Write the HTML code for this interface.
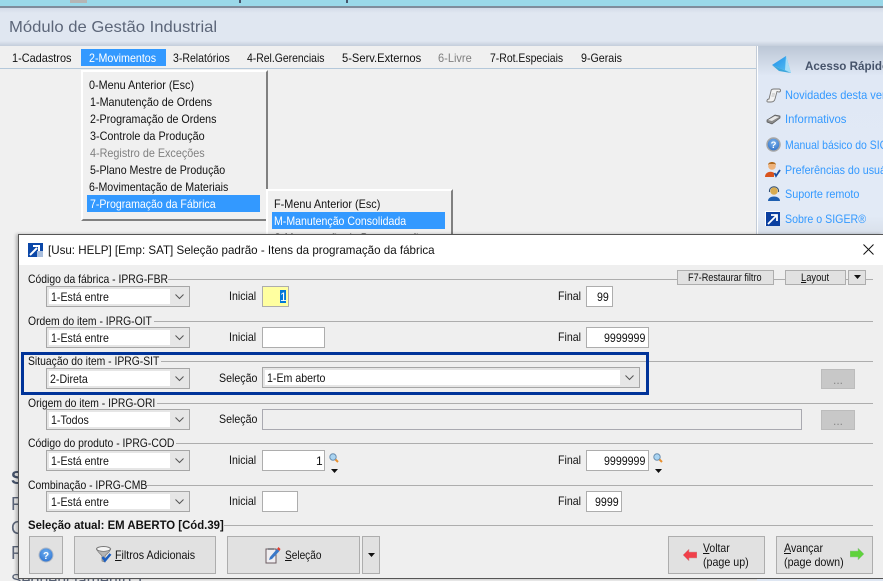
<!DOCTYPE html>
<html lang="pt"><head><meta charset="utf-8"><title>Módulo de Gestão Industrial</title>
<style>
html{margin:0;padding:0;width:883px;height:581px;overflow:hidden}
body{margin:0;padding:0;width:883px;height:581px;position:relative;overflow:hidden;background:#f0f0f0;font:12px/14px "Liberation Sans",sans-serif;color:#111}
#root{left:0;top:0;width:883px;height:581px;overflow:hidden;background:#f0f0f0}
div,svg{position:absolute}
.t{position:absolute;white-space:nowrap;height:14px;transform:scaleX(.885);transform-origin:0 50%}
.box{background:#fff;border:1px solid #adadad;box-sizing:border-box}
.combo{box-sizing:border-box;border:1px solid #a6a6a6;background:#e6e6e6;width:144px;left:46px;height:21px}
.combo i{position:absolute;left:2px;top:2px;bottom:2px;right:19px;background:#fff}
.combo svg{right:5px;top:7px}
.line{height:1px;background:#adadad;right:10px}
.btn{box-sizing:border-box;border:1px solid #adadad;background:#e1e1e1}
.dots{left:821px;width:34px;height:20px;background:#c8c8c8;border:1px solid #bcbcbc;box-sizing:border-box;color:#888;text-align:center;line-height:20px}
.link{color:#3399ff;left:785px}
u{text-decoration:underline}
</style></head><body><div id="root">
<div style="left:0;top:0;width:883px;height:6px;background:#9ad8e9"></div>
<div style="left:70px;top:0;width:17px;height:3px;background:#b5b5b5"></div>
<div style="left:239px;top:0;width:2px;height:3px;background:#46546a"></div>
<div style="left:346px;top:0;width:2px;height:3px;background:#46546a"></div>
<div style="left:0;top:6px;width:883px;height:2px;background:#7f8c9c"></div>
<div style="left:0;top:8px;width:883px;height:38px;background:linear-gradient(#d3dbe8 0,#e0e7f1 5px,#e0e7f1 33px,#c4cedb 38px)"></div>
<span class="t" style="left:9px;top:19px;font-size:16px;line-height:18px;color:#5c6679;transform:scaleX(1.04)">Módulo de Gestão Industrial</span>

<div style="left:0;top:46px;width:756px;height:22px;background:#f0f0f0"></div>
<div style="left:0;top:68px;width:756px;height:1px;background:#b4c8da"></div>
<div style="left:81px;top:49px;width:85px;height:17px;background:#3399ff"></div>
<span class="t" style="left:12px;top:51px;transform:scaleX(.91)">1-Cadastros</span>
<span class="t" style="left:89px;top:51px;color:#fff;transform:scaleX(.89)">2-Movimentos</span>
<span class="t" style="left:173px;top:51px;transform:scaleX(.877)">3-Relatórios</span>
<span class="t" style="left:247px;top:51px;transform:scaleX(.867)">4-Rel.Gerenciais</span>
<span class="t" style="left:342px;top:51px;transform:scaleX(.93)">5-Serv.Externos</span>
<span class="t" style="left:438px;top:51px;color:#808080;transform:scaleX(.92)">6-Livre</span>
<span class="t" style="left:490px;top:51px;transform:scaleX(.87)">7-Rot.Especiais</span>
<span class="t" style="left:581px;top:51px;transform:scaleX(.89)">9-Gerais</span>

<div style="left:757px;top:46px;width:126px;height:190px;background:linear-gradient(#bcc7d6 0,#e0e8f5 30px,#e2eaf6 170px,#d8dfe9 190px);border-left:1px solid #fff;box-sizing:border-box"></div>
<div style="left:756px;top:46px;width:1px;height:190px;background:#c3ccd8"></div>
<svg style="left:771px;top:55px" width="22" height="20" viewBox="0 0 22 20"><defs><linearGradient id="g1" x1="0" y1="0" x2="1" y2="1"><stop offset="0" stop-color="#1f8fe8"/><stop offset="1" stop-color="#5cc4f4"/></linearGradient></defs><path d="M1 10 L15 1 L20 18 Z" fill="url(#g1)"/><path d="M15 1 L20 18 L14 15 Z" fill="#a5def8"/><path d="M1 10 L20 18 L8 16Z" fill="#3aa6dc"/></svg>
<svg style="left:766px;top:88px" width="16" height="15" viewBox="0 0 16 15"><path d="M5 3 C5 1 7 1 8 1 H13 C15 1 15 4 13 4 L11 3.500 L9 11 C8.500 13 7 14 5 14 H2 C0 14 1 11 3 11 Z" fill="#f2f2f2" stroke="#777" stroke-width=".9"/><path d="M6 6H9M5.500 8H8.500" stroke="#aaa" stroke-width=".8"/></svg>
<svg style="left:766px;top:113px" width="15" height="12" viewBox="0 0 15 12"><path d="M1 7 L9 2 L14 3 L14 5 L6 11 L1 9 Z" fill="#8c8c8c" stroke="#555" stroke-width=".7"/><path d="M2 7 L9 3 L13 4 L6 8 Z" fill="#e8e8e8"/></svg>
<svg style="left:766px;top:137px" width="15" height="15" viewBox="0 0 15 15"><defs><radialGradient id="g2" cx=".5" cy=".35" r=".7"><stop offset="0" stop-color="#7fb6ee"/><stop offset="1" stop-color="#2b6cc4"/></radialGradient></defs><circle cx="7.500" cy="7.500" r="6.500" fill="url(#g2)" stroke="#a6a6a6" stroke-width="1.500"/><text x="7.500" y="11" font-family="Liberation Sans" font-size="9.500" font-weight="bold" fill="#fff" text-anchor="middle">?</text></svg>
<svg style="left:765px;top:161px" width="16" height="17" viewBox="0 0 16 17"><circle cx="7" cy="5" r="3.800" fill="#eeb27a"/><path d="M3 4 C3 0 11 0 11 4 L10 3 H4 Z" fill="#b06a20"/><path d="M0 16 C0 9 11 9 11 16 Z" fill="#d9541e"/><rect x="9" y="10" width="6" height="6" fill="#e8eef8"/><path d="M9.500 12 L11 15 L15 9" stroke="#1c4fa0" stroke-width="1.800" fill="none"/></svg>
<svg style="left:767px;top:186px" width="14" height="15" viewBox="0 0 14 15"><circle cx="7" cy="5" r="3.800" fill="#d8ac50"/><path d="M2.500 6 C1.500 -1 12.500 -1 11.500 6" fill="none" stroke="#2b4a70" stroke-width="1"/><path d="M1 15 C1 9 13 9 13 15 Z" fill="#1e5fb0"/></svg>
<svg style="left:765px;top:211px" width="15" height="15" viewBox="0 0 15 15"><rect width="15" height="15" fill="#fff"/><rect x="1" y="1" width="14" height="14" fill="#0b3fa0"/><path d="M3 13 L11 5 M6 4 H12 V10" stroke="#fff" stroke-width="1.800" fill="none"/></svg>
<span class="t" style="left:805px;top:59px;font-weight:bold;color:#46536a;transform:scaleX(.97)">Acesso Rápido</span>
<span class="t link" style="top:88px;transform:scaleX(.92)">Novidades desta versão</span>
<span class="t link" style="top:112px;transform:scaleX(.94)">Informativos</span>
<span class="t link" style="top:138px;transform:scaleX(.87)">Manual básico do SIGER</span>
<span class="t link" style="top:163px;transform:scaleX(.89)">Preferências do usuário</span>
<span class="t link" style="top:187px;transform:scaleX(.9)">Suporte remoto</span>
<span class="t link" style="top:212px">Sobre o SIGER®</span>

<div style="left:81px;top:70px;width:187px;height:151px;box-sizing:border-box;background:#f0f0f0;border:2px solid #fff;border-right-color:#808080;border-bottom-color:#808080"></div>
<span class="t" style="left:89px;top:78px;transform:scaleX(.9)">0-Menu Anterior (Esc)</span>
<span class="t" style="left:90px;top:95px;transform:scaleX(.897)">1-Manutenção de Ordens</span>
<span class="t" style="left:90px;top:112px;transform:scaleX(.89)">2-Programação de Ordens</span>
<span class="t" style="left:90px;top:129px;transform:scaleX(.9)">3-Controle da Produção</span>
<span class="t" style="left:90px;top:146px;color:#808080;transform:scaleX(.9)">4-Registro de Exceções</span>
<span class="t" style="left:90px;top:163px;transform:scaleX(.885)">5-Plano Mestre de Produção</span>
<span class="t" style="left:89px;top:180px;transform:scaleX(.885)">6-Movimentação de Materiais</span>
<div style="left:87px;top:195px;width:173px;height:17px;background:#3399ff"></div>
<span class="t" style="left:90px;top:197px;color:#fff;transform:scaleX(.88)">7-Programação da Fábrica</span>

<div style="left:266px;top:189px;width:187px;height:60px;box-sizing:border-box;background:#f0f0f0;border:2px solid #fff;border-right-color:#808080"></div>
<span class="t" style="left:274px;top:197px;transform:scaleX(.906)">F-Menu Anterior (Esc)</span>
<div style="left:272px;top:212px;width:173px;height:17px;background:#3399ff"></div>
<span class="t" style="left:274px;top:214px;color:#fff;transform:scaleX(.88)">M-Manutenção Consolidada</span>
<span class="t" style="left:274px;top:231px">S-Manutenção de Programação</span>

<span class="t" style="left:11px;top:468px;font-size:18px;font-weight:bold;line-height:20px;color:#46536a;transform:none">S</span>
<span class="t" style="left:11px;top:494px;font-size:18px;line-height:20px;color:#5c6679;transform:none">F</span>
<span class="t" style="left:11px;top:518px;font-size:18px;line-height:20px;color:#5c6679;transform:none">C</span>
<span class="t" style="left:11px;top:543px;font-size:18px;line-height:20px;color:#5c6679;transform:none">R</span>
<span class="t" style="left:11px;top:571px;font-size:16px;line-height:20px;color:#5c6679;transform:none">Sequenciamento T</span>

<div style="left:18px;top:234px;width:865px;height:345px;box-sizing:border-box;background:#efefef;border:1px solid #555;border-right:0;box-shadow:-2px 0 3px rgba(0,0,0,.25)"></div>
<div style="left:19px;top:235px;width:864px;height:30px;background:#fff"></div>
<svg style="left:28px;top:243px" width="15" height="14" viewBox="0 0 15 14"><rect width="15" height="14" fill="#0b47a8"/><path d="M2 12 L9 5 M5 3 H11 V9" stroke="#fff" stroke-width="2" fill="none"/><rect x="9" y="8" width="6" height="6" fill="#a9bedd"/></svg>
<span class="t" style="left:48px;top:243px;transform:scaleX(.965)">[Usu: HELP] [Emp: SAT] Seleção padrão - Itens da programação da fábrica</span>
<svg style="left:863px;top:244px" width="11" height="11" viewBox="0 0 11 11"><path d="M.5 .5 L10.500 10.500 M10.500 .5 L.5 10.500" stroke="#111" stroke-width="1"/></svg>

<div class="line" style="left:168px;top:279px"></div>
<div class="line" style="left:154px;top:321px"></div>
<div class="line" style="left:161px;top:361px"></div>
<div class="line" style="left:157px;top:403px"></div>
<div class="line" style="left:176px;top:443px"></div>
<div class="line" style="left:145px;top:485px"></div>
<div class="line" style="left:224px;top:525px"></div>

<span class="t" style="left:28px;top:272px;transform:scaleX(.864)">Código da fábrica - IPRG-FBR</span>
<span class="t" style="left:28px;top:314px;transform:scaleX(.864)">Ordem do item - IPRG-OIT</span>
<span class="t" style="left:28px;top:354px;transform:scaleX(.864)">Situação do item - IPRG-SIT</span>
<span class="t" style="left:28px;top:396px;transform:scaleX(.864)">Origem do item - IPRG-ORI</span>
<span class="t" style="left:28px;top:436px;transform:scaleX(.864)">Código do produto - IPRG-COD</span>
<span class="t" style="left:28px;top:478px;transform:scaleX(.864)">Combinação - IPRG-CMB</span>
<span class="t" style="left:28px;top:518px;font-weight:bold;transform:scaleX(.947)">Seleção atual: EM ABERTO [Cód.39]</span>

<div class="btn" style="left:677px;top:270px;width:97px;height:15px"></div>
<span class="t" style="left:688px;top:271px;font-size:11px;transform:scaleX(.83)">F7-Restaurar filtro</span>
<div class="btn" style="left:785px;top:270px;width:61px;height:15px"></div>
<span class="t" style="left:801px;top:271px;font-size:11px;transform:scaleX(.85)"><u>L</u>ayout</span>
<div class="btn" style="left:848px;top:270px;width:18px;height:15px"></div>
<svg style="left:854px;top:275px" width="7" height="4" viewBox="0 0 7 4"><path d="M0 0H7L3.500 4Z" fill="#111"/></svg>

<div class="combo" style="top:286px"><i></i><svg width="9" height="6" viewBox="0 0 9 6"><path d="M.5 .5 L4.500 4.500 L8.500 .5" stroke="#555" fill="none"/></svg></div>
<div class="combo" style="top:327px"><i></i><svg width="9" height="6" viewBox="0 0 9 6"><path d="M.5 .5 L4.500 4.500 L8.500 .5" stroke="#555" fill="none"/></svg></div>
<div class="combo" style="top:368px"><i></i><svg width="9" height="6" viewBox="0 0 9 6"><path d="M.5 .5 L4.500 4.500 L8.500 .5" stroke="#555" fill="none"/></svg></div>
<div class="combo" style="top:409px"><i></i><svg width="9" height="6" viewBox="0 0 9 6"><path d="M.5 .5 L4.500 4.500 L8.500 .5" stroke="#555" fill="none"/></svg></div>
<div class="combo" style="top:450px"><i></i><svg width="9" height="6" viewBox="0 0 9 6"><path d="M.5 .5 L4.500 4.500 L8.500 .5" stroke="#555" fill="none"/></svg></div>
<div class="combo" style="top:491px"><i></i><svg width="9" height="6" viewBox="0 0 9 6"><path d="M.5 .5 L4.500 4.500 L8.500 .5" stroke="#555" fill="none"/></svg></div>
<span class="t" style="left:51px;top:290px">1-Está entre</span>
<span class="t" style="left:51px;top:331px">1-Está entre</span>
<span class="t" style="left:50px;top:372px">2-Direta</span>
<span class="t" style="left:51px;top:413px">1-Todos</span>
<span class="t" style="left:51px;top:454px">1-Está entre</span>
<span class="t" style="left:51px;top:495px">1-Está entre</span>

<span class="t" style="left:229px;top:289px">Inicial</span>
<span class="t" style="left:229px;top:330px">Inicial</span>
<span class="t" style="left:219px;top:371px">Seleção</span>
<span class="t" style="left:219px;top:412px">Seleção</span>
<span class="t" style="left:229px;top:453px">Inicial</span>
<span class="t" style="left:229px;top:494px">Inicial</span>
<span class="t" style="left:558px;top:289px">Final</span>
<span class="t" style="left:558px;top:330px">Final</span>
<span class="t" style="left:558px;top:453px">Final</span>
<span class="t" style="left:558px;top:494px">Final</span>

<div class="box" style="left:262px;top:286px;width:27px;height:21px;background:#ffffa0"></div>
<div style="left:280px;top:290px;width:6px;height:13px;background:#0078d7"></div>
<span class="t" style="left:280px;top:290px;color:#fff;transform:none">1</span>
<div class="box" style="left:262px;top:327px;width:63px;height:21px"></div>
<div class="box" style="left:262px;top:450px;width:63px;height:21px"></div>
<span class="t" style="left:316px;top:454px;transform:none">1</span>
<div class="box" style="left:262px;top:491px;width:36px;height:21px"></div>
<div class="box" style="left:586px;top:286px;width:27px;height:21px"></div>
<span class="t" style="left:597px;top:290px">99</span>
<div class="box" style="left:586px;top:327px;width:63px;height:21px"></div>
<span class="t" style="left:604px;top:331px">9999999</span>
<div class="box" style="left:586px;top:450px;width:63px;height:21px"></div>
<span class="t" style="left:604px;top:454px">9999999</span>
<div class="box" style="left:586px;top:491px;width:36px;height:21px"></div>
<span class="t" style="left:595px;top:495px">9999</span>

<div class="box" style="left:262px;top:409px;width:540px;height:21px;background:#efefef;border-color:#a9a9b0"></div>
<div class="dots" style="top:369px">...</div>
<div class="dots" style="top:410px">...</div>

<div class="combo" style="left:262px;top:367px;width:378px"><i></i><svg width="9" height="6" viewBox="0 0 9 6"><path d="M.5 .5 L4.500 4.500 L8.500 .5" stroke="#555" fill="none"/></svg></div>
<span class="t" style="left:267px;top:371px">1-Em aberto</span>
<div style="left:21px;top:352px;width:628px;height:43px;box-sizing:border-box;border:3px solid #003399"></div>

<svg style="left:329px;top:453px" width="10" height="10" viewBox="0 0 10 10"><circle cx="4" cy="4" r="3.200" fill="#a9d4f2" stroke="#6b8fb0"/><path d="M6.500 6.500 L9 9" stroke="#e89030" stroke-width="2"/></svg>
<svg style="left:331px;top:469px" width="7" height="4" viewBox="0 0 7 4"><path d="M0 0H7L3.500 4Z" fill="#111"/></svg>
<svg style="left:653px;top:453px" width="10" height="10" viewBox="0 0 10 10"><circle cx="4" cy="4" r="3.200" fill="#a9d4f2" stroke="#6b8fb0"/><path d="M6.500 6.500 L9 9" stroke="#e89030" stroke-width="2"/></svg>
<svg style="left:655px;top:469px" width="7" height="4" viewBox="0 0 7 4"><path d="M0 0H7L3.500 4Z" fill="#111"/></svg>

<div class="btn" style="left:29px;top:536px;width:34px;height:38px"></div>
<svg style="left:38px;top:547px" width="16" height="16" viewBox="0 0 16 16"><defs><radialGradient id="g3" cx=".5" cy=".35" r=".7"><stop offset="0" stop-color="#6fb0f0"/><stop offset="1" stop-color="#2a70d0"/></radialGradient></defs><circle cx="8" cy="8" r="7" fill="url(#g3)" stroke="#b0b8c4"/><text x="8" y="12" font-family="Liberation Sans" font-size="10" font-weight="bold" fill="#fff" text-anchor="middle">?</text></svg>
<div class="btn" style="left:74px;top:536px;width:142px;height:38px"></div>
<svg style="left:96px;top:546px" width="16" height="17" viewBox="0 0 16 17"><ellipse cx="7.500" cy="3" rx="7" ry="2.500" fill="#f4f4f4" stroke="#777"/><path d="M.8 3.500 C3 8 5 8 6 10 V15 L9 16 V10 C10 8 13 7 14.500 3.500 C11 6 4 6 .8 3.500 Z" fill="#b5b5b5" stroke="#777" stroke-width=".7"/><path d="M6.500 11 L9 14.500 L14.500 8" stroke="#1c5fc0" stroke-width="2.500" fill="none"/></svg>
<span class="t" style="left:115px;top:548px;transform:scaleX(.89)"><u>F</u>iltros Adicionais</span>
<div class="btn" style="left:227px;top:536px;width:133px;height:38px"></div>
<svg style="left:265px;top:546px" width="16" height="18" viewBox="0 0 16 18"><path d="M1 3 H11 V17 H1 Z" fill="#f0eef0" stroke="#6a5a60"/><path d="M3 2 H9 V4 H3Z" fill="#8a8a90"/><path d="M5 11 L12 3 L14.500 5 L7 13 L4 14 Z" fill="#3a78c8"/><path d="M12 3 L13.500 1 L15.500 3 L14.500 5 Z" fill="#e04030"/></svg>
<span class="t" style="left:285px;top:548px;transform:scaleX(.84)"><u>S</u>eleção</span>
<div class="btn" style="left:362px;top:536px;width:18px;height:38px"></div>
<svg style="left:368px;top:553px" width="7" height="4" viewBox="0 0 7 4"><path d="M0 0H7L3.500 4Z" fill="#111"/></svg>
<div class="btn" style="left:668px;top:536px;width:97px;height:38px"></div>
<svg style="left:683px;top:549px" width="14" height="12" viewBox="0 0 14 12"><path d="M0 6 L6 0 V3 H14 V9 H6 V12 Z" fill="#f0404a" stroke="#c9a0a0" stroke-width=".5"/></svg>
<span class="t" style="left:703px;top:541px;transform:scaleX(.87)"><u>V</u>oltar</span>
<span class="t" style="left:703px;top:555px;transform:scaleX(.89)">(page up)</span>
<div class="btn" style="left:776px;top:536px;width:97px;height:38px"></div>
<svg style="left:850px;top:548px" width="14" height="12" viewBox="0 0 14 12"><path d="M14 6 L8 0 V3 H0 V9 H8 V12 Z" fill="#5fd23c" stroke="#a0c0a0" stroke-width=".5"/></svg>
<span class="t" style="left:784px;top:541px;transform:scaleX(.89)"><u>A</u>vançar</span>
<span class="t" style="left:784px;top:555px;transform:scaleX(.895)">(page down)</span>

<div style="left:757px;top:579px;width:126px;height:2px;background:#dfe7f3"></div>
</div></body></html>
